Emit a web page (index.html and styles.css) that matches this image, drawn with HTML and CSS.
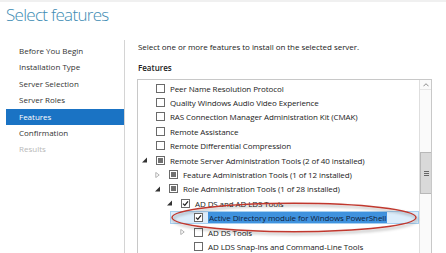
FILE: index.html
```html
<!DOCTYPE html>
<html lang="en">
<head>
  <meta charset="UTF-8"/>
  <meta name="viewport" content="width=device-width,initial-scale=1"/>
  <title>Select features</title>
  <link rel="stylesheet" href="styles.css">
</head>
<body>
  <div class="page">
    <h1 class="title">Select features</h1>

    <div class="wizard">
      <nav class="steps">
        <div class="step">Before You Begin</div>
        <div class="step">Installation Type</div>
        <div class="step">Server Selection</div>
        <div class="step">Server Roles</div>
        <div class="step active">Features</div>
        <div class="step">Confirmation</div>
        <div class="step disabled">Results</div>
      </nav>

      <div class="content">
        <p class="intro">Select one or more features to install on the selected server.</p>
        <h2 class="label">Features</h2>

        <div class="tree">
          <ul class="rows">
            <li class="row lvl0"><span class="tw"></span><span class="cb"></span>Peer Name Resolution Protocol</li>
            <li class="row lvl0"><span class="tw"></span><span class="cb"></span>Quality Windows Audio Video Experience</li>
            <li class="row lvl0"><span class="tw"></span><span class="cb"></span>RAS Connection Manager Administration Kit (CMAK)</li>
            <li class="row lvl0"><span class="tw"></span><span class="cb"></span>Remote Assistance</li>
            <li class="row lvl0"><span class="tw"></span><span class="cb"></span>Remote Differential Compression</li>
            <li class="row lvl0">
              <span class="tw"><svg viewBox="0 0 5 5"><path d="M5 0V5H0Z" fill="#333"/></svg></span>
              <span class="cb part"></span>Remote Server Administration Tools (2 of 40 installed)
            </li>
            <li class="row lvl1">
              <span class="tw"><svg viewBox="0 0 5 7"><path d="M0.5 0.5L4.5 3.5L0.5 6.5Z" fill="none" stroke="#a6a6a6"/></svg></span>
              <span class="cb part"></span>Feature Administration Tools (1 of 12 installed)
            </li>
            <li class="row lvl1">
              <span class="tw"><svg viewBox="0 0 5 5"><path d="M5 0V5H0Z" fill="#333"/></svg></span>
              <span class="cb part"></span>Role Administration Tools (1 of 28 installed)
            </li>
            <li class="row lvl2">
              <span class="tw"><svg viewBox="0 0 5 5"><path d="M5 0V5H0Z" fill="#333"/></svg></span>
              <span class="cb on"><svg viewBox="0 0 7 7"><path d="M1 3.6L2.8 5.4L6 1.4" fill="none" stroke="#222" stroke-width="1.3"/></svg></span>AD DS and AD LDS Tools
            </li>
            <li class="row lvl3 selected">
              <span class="tw"></span>
              <span class="cb on"><svg viewBox="0 0 7 7"><path d="M1 3.6L2.8 5.4L6 1.4" fill="none" stroke="#222" stroke-width="1.3"/></svg></span><span class="hl">Active Directory module for Windows PowerShell</span>
            </li>
            <li class="row lvl3">
              <span class="tw"><svg viewBox="0 0 5 7"><path d="M0.5 0.5L4.5 3.5L0.5 6.5Z" fill="none" stroke="#a6a6a6"/></svg></span>
              <span class="cb"></span>AD DS Tools
            </li>
            <li class="row lvl3"><span class="tw"></span><span class="cb"></span>AD LDS Snap-Ins and Command-Line Tools</li>
          </ul>

          <div class="scrollbar">
            <div class="sb-up"><svg viewBox="0 0 7 4"><path d="M0.5 3.5L3.5 0.5L6.5 3.5" fill="none" stroke="#777"/></svg></div>
            <div class="sb-thumb"><span></span><span></span><span></span></div>
          </div>
        </div>
      </div>
    </div>

    <svg class="callout" viewBox="0 0 252 36">
      <defs>
        <filter id="soft" x="-10%" y="-40%" width="120%" height="180%">
          <feDropShadow dx="1" dy="2" stdDeviation="1.5" flood-color="#000" flood-opacity="0.35"/>
        </filter>
      </defs>
      <ellipse cx="124" cy="15.5" rx="122" ry="14.2" fill="none" stroke="#c0392f" stroke-width="1.4" filter="url(#soft)"/>
    </svg>
  </div>
</body>
</html>
```

FILE: styles.css
```css
body { margin:0; background:#fff; font-family:"Open Sans", "Noto Sans", sans-serif; color:#222; }
.page { position:relative; width:446px; height:253px; overflow:hidden; border-top:2px solid #f0f0f0; box-sizing:border-box; }

.title {
  margin:0; padding:1px 0 0 6px; height:38px; box-sizing:border-box;
  font-size:17px; font-weight:300; color:#3d8bb3; letter-spacing:-0.7px;
}

.wizard { display:flex; }
.steps {
  width:118px; padding:3px 0 0 6px; border-right:1px solid #d4d4d4;
  height:215px;
}
.step { height:16.4px; line-height:16.4px; padding-left:13px; font-size:8px; color:#333; }
.step.active { background:#1a73c4; color:#fff; }
.step.disabled { color:#b8b8b8; }

.content { padding-left:12px; }
.intro { margin:1px 0 0 1px; font-size:8px; line-height:12px; color:#222; letter-spacing:-0.05px; }
.label { margin:9px 0 0 1px; font-size:8px; line-height:12px; font-weight:600; color:#222; }

.tree {
  display:flex; width:295px; height:200px; margin-top:5px;
  border:1px solid #c8c8c8; border-bottom:none; box-sizing:border-box;
}
.rows { list-style:none; margin:0; padding:1px 0 0; flex:1; }
.row {
  display:flex; align-items:center; height:14.4px; box-sizing:border-box;
  font-size:8px; color:#222; white-space:nowrap; letter-spacing:-0.1px;
}
.lvl0 { padding-left:4px; }
.lvl1 { padding-left:17px; }
.lvl2 { padding-left:29px; }
.lvl3 { padding-left:42px; }
.row.selected {
  margin-left:32px; padding-left:9px; height:13.4px; margin-bottom:1px;
  background:#dcedfb; border:1px solid #a8d0f0;
}

.tw { width:14px; display:flex; align-items:center; }
.tw svg { width:5px; height:6px; }
.cb {
  width:9px; height:9px; box-sizing:border-box; margin-right:5px;
  border:1px solid #6a6a6a; background:#fff; display:flex; align-items:center; justify-content:center;
}
.cb.part::after { content:""; width:5px; height:5px; background:#707070; }
.cb.on svg { width:7px; height:7px; }
.hl { background:#3f92de; color:#0f1d3a; padding:0 1px; line-height:11px; }

.scrollbar {
  width:12px; background:#fafafa; border-left:1px solid #dedede; box-sizing:border-box;
}
.sb-up { height:9px; display:flex; align-items:center; justify-content:center; border-bottom:1px solid #e6e6e6; }
.sb-up svg { width:6px; height:4px; }
.sb-thumb {
  margin-top:62px; height:40px; background:#d9d9d9; border:1px solid #b8b8b8; border-right:none;
  display:flex; flex-direction:column; align-items:center; justify-content:center; gap:1px;
}
.sb-thumb span { width:5px; height:1px; background:#666; }

.callout { position:absolute; left:170px; top:200px; width:252px; height:36px; overflow:visible; }
```
